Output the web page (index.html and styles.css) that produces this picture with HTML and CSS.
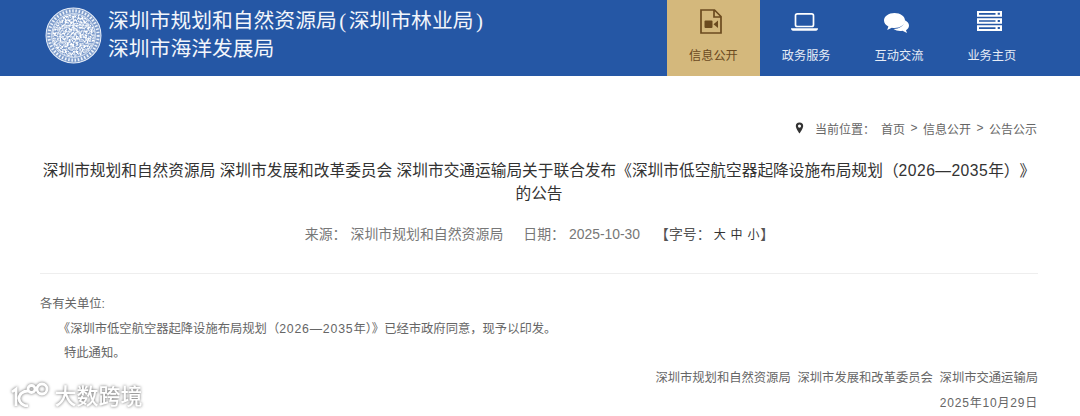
FILE: index.html
```html
<!DOCTYPE html>
<html lang="zh-CN">
<head>
<meta charset="utf-8">
<title>深圳市规划和自然资源局</title>
<link rel="stylesheet" href="styles.css">
</head>
<body>
<header class="header">
  <div class="brand">
    <svg class="seal" viewBox="0 0 56 56" aria-hidden="true">
      <defs>
        <filter id="grain" x="0" y="0" width="100%" height="100%">
          <feTurbulence type="fractalNoise" baseFrequency="0.55" numOctaves="2" seed="7"/>
          <feColorMatrix values="0 0 0 0 1  0 0 0 0 1  0 0 0 0 1  3 0 0 0 -1"/>
        </filter>
        <clipPath id="disc"><circle cx="28" cy="28" r="21"/></clipPath>
      </defs>
      <circle cx="28" cy="28" r="27" fill="#7f9dcc" stroke="#e8eef8" stroke-width="1"/>
      <circle cx="28" cy="28" r="24.200" fill="none" stroke="#eef3fa" stroke-width="3" stroke-dasharray="1.500 1.700"/>
      <circle cx="28" cy="28" r="21.500" fill="#7f9dcc" stroke="#e6edf7" stroke-width=".9"/>
      <g clip-path="url(#disc)"><rect x="6" y="6" width="44" height="44" filter="url(#grain)"/></g>
      <path d="M17 18h22M28 10v14M14 28l9 8 9-12 10 9" fill="none" stroke="#f2f6fb" stroke-width=".8"/>
    </svg>
    <div class="brand-text">
      <div class="brand-line">深圳市规划和自然资源局<span class="paren">(</span>深圳市林业局<span class="paren">)</span></div>
      <div class="brand-line">深圳市海洋发展局</div>
    </div>
  </div>
  <nav class="nav">
    <a class="nav-item active">
      <svg class="nav-icon icon-doc" viewBox="0 0 22 25" aria-hidden="true">
        <path d="M1 1h13.500L21 7.500V24H1zM14 1v7h7" fill="none" stroke="currentColor" stroke-width="1.700"/>
        <rect x="4.500" y="11.500" width="8" height="7.500" rx="1" fill="currentColor"/>
        <path d="M13.500 15.200l4.500-3.700v7.500z" fill="currentColor"/>
      </svg>
      <span class="nav-label">信息公开</span>
    </a>
    <a class="nav-item">
      <svg class="nav-icon icon-laptop" viewBox="0 0 27 18" aria-hidden="true">
        <rect x="4.500" y=".9" width="18" height="12.600" rx="1.800" fill="none" stroke="currentColor" stroke-width="1.700"/>
        <path d="M0 15.200h27c0 1.500-.8 2.500-2 2.500H2C.8 17.700 0 16.700 0 15.200z" fill="currentColor"/>
      </svg>
      <span class="nav-label">政务服务</span>
    </a>
    <a class="nav-item">
      <svg class="nav-icon icon-chat" viewBox="0 0 25 20" aria-hidden="true">
        <path d="M10.500 0C4.700 0 0 3.400 0 7.500c0 2.500 1.700 4.700 4.400 6L3.200 17l4.600-2.200c.9.200 1.800.2 2.700.2C16.300 15 21 11.600 21 7.500S16.300 0 10.500 0z" fill="currentColor"/>
        <path d="M20.500 7C23.500 8.500 25 10.500 25 12.500c0 2-1.200 3.600-3 4.700L23 20l-4.500-2.300c-3.200.5-6.500 0-9-1.700 5.500 0 11-3 11-9z" fill="currentColor"/>
      </svg>
      <span class="nav-label">互动交流</span>
    </a>
    <a class="nav-item">
      <svg class="nav-icon icon-server" viewBox="0 0 25 20" aria-hidden="true">
        <path fill-rule="evenodd" d="M0 0h25v5.700H0zM0 7.150h25v5.700H0zM0 14.300h25V20H0zM2 2v1.700h16.500V2zM20.700 1.800v2h2.200v-2zM2 9.150v1.700h16.500v-1.700zM20.700 8.950v2h2.200v-2zM2 16.300V18h16.500v-1.700zM20.700 16.100v2h2.200v-2z" fill="currentColor"/>
      </svg>
      <span class="nav-label">业务主页</span>
    </a>
  </nav>
</header>

<main class="main">
  <div class="crumbs">
    <svg class="pin" viewBox="0 0 10 14" aria-hidden="true">
      <path fill-rule="evenodd" d="M5 .5a4.300 4.300 0 0 0-4.300 4.300C.7 8 5 13.500 5 13.500s4.300-5.500 4.300-8.700A4.300 4.300 0 0 0 5 .5zm0 2.500a1.800 1.800 0 1 1 0 3.600A1.800 1.800 0 0 1 5 3z" fill="#333"/>
    </svg>
    <span class="crumb-label">当前位置：</span>
    <span>首页</span><span class="sep">&gt;</span><span>信息公开</span><span class="sep">&gt;</span><span>公告公示</span>
  </div>

  <h1 class="title">深圳市规划和自然资源局 深圳市发展和改革委员会 深圳市交通运输局关于联合发布《深圳市低空航空器起降设施布局规划（<span class="num">2026—2035</span>年）》<br>的公告</h1>

  <div class="meta">
    <span>来源：</span><span class="meta-source">深圳市规划和自然资源局</span>
    <span class="meta-date-label">日期：</span><span class="meta-date">2025-10-30</span>
    <span class="meta-size">【字号：<b>大 中 小</b>】</span>
  </div>

  <article class="body">
    <p>各有关单位:</p>
    <p class="indent">《深圳市低空航空器起降设施布局规划（<span class="num-small">2026—2035</span>年）》已经市政府同意，现予以印发。</p>
    <p class="indent">特此通知。</p>
    <p class="right">深圳市规划和自然资源局&nbsp;&nbsp;深圳市发展和改革委员会&nbsp;&nbsp;深圳市交通运输局</p>
    <p class="right date">2025年10月29日</p>
  </article>
</main>

<div class="watermark">
  <svg class="wm-logo" viewBox="0 0 40 26" aria-hidden="true">
    <g fill="none" stroke="#fff" stroke-width="2.800">
      <path d="M3 11l4-3v17M19 10c-5 0-9 3-9 7.500 0 4 4 7.500 9 7.500"/>
      <circle cx="22.500" cy="8" r="3.500"/>
      <circle cx="33" cy="8" r="5"/>
    </g>
  </svg>
  <span class="wm-text">大数跨境</span>
</div>
</body>
</html>
```

FILE: styles.css
```css
* { box-sizing: border-box; }
html, body { margin: 0; padding: 0; }
body {
  width: 1080px;
  height: 416px;
  overflow: hidden;
  position: relative;
  background: #fff;
  color: #555;
  font-family: "Liberation Sans", "Noto Sans CJK SC", sans-serif;
}
.header {
  height: 76px;
  background: #2557a5;
  display: flex;
  justify-content: space-between;
  padding-left: 45px;
}
.brand { display: flex; align-items: center; gap: 6px; margin-top: -6px; }
.seal { width: 57px; height: 57px; flex: none; }
.brand-text {
  color: #f2f5fb;
  font-size: 20.800px;
  line-height: 27.500px;
  margin-top: -3px;
  font-family: "Noto Sans CJK SC", sans-serif;
  font-weight: 400;
}
.brand-line { white-space: nowrap; }
.paren { margin: 0 2.500px; font-family: "Liberation Serif", serif; }
.nav { display: flex; width: 413px; }
.nav-item {
  width: 92.800px;
  display: flex;
  flex-direction: column;
  align-items: center;
  color: #fff;
  padding-top: 9px;
}
.nav-icon { margin-right: 4px; }
.nav-label {
  margin-top: auto;
  margin-bottom: 12px;
  font-size: 12.200px;
  line-height: 16px;
  color: #e6ecf6;
}
.nav-item.active { background: #d4b87c; color: #6b4a1f; }
.nav-item.active .nav-label { color: #6b4a1f; }
.icon-doc { width: 22px; height: 25px; }
.icon-laptop { width: 27px; height: 18px; margin-top: 4px; }
.icon-chat { width: 25px; height: 20px; margin-top: 4px; }
.icon-server { width: 25px; height: 20px; margin-top: 2px; }
.main { padding: 0 42px 0 40px; }
.crumbs {
  display: flex;
  justify-content: flex-end;
  align-items: center;
  height: 20px;
  margin-top: 42px;
  padding-right: 1px;
  font-size: 12px;
  color: #666;
}
.pin { width: 9px; height: 12px; margin-right: 11px; }
.crumb-label { margin-right: 6px; }
.sep { margin: 0 5.500px; }
.title {
  margin: 21px 0 0;
  font-size: 15.700px;
  font-weight: 400;
  line-height: 23px;
  color: #333;
  text-align: center;
  text-spacing-trim: space-all;
}
.num { letter-spacing: .45px; }
.num-small { letter-spacing: .8px; }
.meta {
  margin-top: 19px;
  padding-left: 1px;
  height: 20px;
  line-height: 20px;
  display: flex;
  justify-content: center;
  font-size: 13.900px;
  color: #777;
}
.meta-source { margin-left: 4px; }
.meta-date-label { margin-left: 20px; }
.meta-date { margin-left: 4px; }
.meta-size { margin-left: 15px; color: #555; }
.meta-size b { margin-left: 3px; font-size: 12px; font-weight: 400; color: #333; letter-spacing: .8px; }
.body {
  margin-top: 29px;
  padding-top: 18px;
  border-top: 1px solid #eee;
  font-size: 12.300px;
  color: #666;
  line-height: 24.700px;
  text-spacing-trim: trim-start;
}
.body p { margin: 0; }
.indent { padding-left: 24px; }
.right { text-align: right; }
.date { font-size: 12px; letter-spacing: .8px; }
.watermark {
  position: absolute;
  left: 9px;
  top: 381px;
  display: flex;
  align-items: center;
  gap: 5.500px;
  filter: drop-shadow(0 0 1.500px rgba(0,0,0,.6));
}
.wm-logo { width: 40px; height: 26px; }
.wm-text { color: #fff; font-size: 22px; line-height: 26px; font-weight: 500; font-family: "Noto Sans CJK SC", sans-serif; }
```
